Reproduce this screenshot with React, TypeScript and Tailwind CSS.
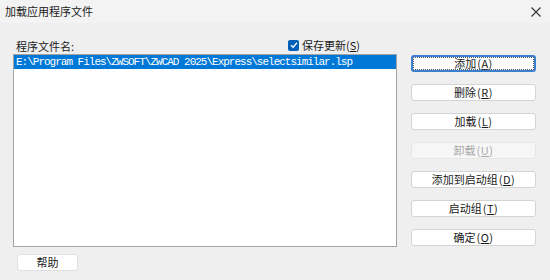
import React from "react";

const cjk = { fontFamily: '"Noto Sans CJK SC", "Noto Sans", sans-serif' };

function Btn({
  label,
  keyChar,
  focused,
  disabled,
}: {
  label: string;
  keyChar?: string;
  focused?: boolean;
  disabled?: boolean;
}) {
  let cls =
    "flex h-[17px] w-[125px] items-center justify-center rounded-[3px] text-[11px] leading-none ";
  if (focused) cls += "border-2 border-[#3b7fd0] bg-white text-[#1a1a1a] outline-1 outline-dotted outline-[#555] -outline-offset-[3px]";
  else if (disabled) cls += "border border-[#e6e6e6] bg-[#f6f6f6] text-[#a8a8a8]";
  else cls += "border border-[#d4d4d4] bg-white text-[#1a1a1a]";
  return (
    <div className={cls}>
      <span>{label}</span>
      {keyChar && (
        <span className="ml-[1px] tracking-[0.5px]">
          (<u className="underline-offset-[1px]">{keyChar}</u>)
        </span>
      )}
    </div>
  );
}

export default function App() {
  return (
    <div className="h-[280px] w-[550px] overflow-hidden bg-[#efefef] text-[#1a1a1a]" style={cjk}>
      {/* title bar */}
      <div className="flex h-[23px] items-center justify-between bg-[#f3f3f3] pl-[5px] pr-[8px]">
        <span className="text-[11px]">加载应用程序文件</span>
        <svg width="10" height="10" viewBox="0 0 10 10" className="mr-[1px]">
          <path d="M0.5 0.5 L9.5 9.5 M9.5 0.5 L0.5 9.5" stroke="#333" strokeWidth="1.1" />
        </svg>
      </div>

      <div className="flex pl-[13px]">
        {/* left side */}
        <div className="w-[384px] pt-[13px]">
          <div className="flex h-[18px] items-center">
            <span className="w-[275px] pl-[3px] pt-[3px] text-[11px]">程序文件名:</span>
            <span className="flex items-center gap-[3px] text-[11px]">
              <span className="flex h-[11px] w-[11px] items-center justify-center rounded-[2px] bg-[#005fb8]">
                <svg width="8" height="8" viewBox="0 0 8 8">
                  <path d="M1 4.2 L3.1 6.2 L7 1.8" fill="none" stroke="white" strokeWidth="1.3" />
                </svg>
              </span>
              <span>
                保存更新(<u className="underline-offset-[1px]">S</u>)
              </span>
            </span>
          </div>
          <div className="h-[193px] border border-[#a3a3a3] bg-white">
            <div
              className="flex h-[14px] items-center bg-[#0078d7] pl-[2px] text-[11px] leading-none tracking-[-1px] text-white"
              style={{ fontFamily: '"Liberation Mono", monospace' }}
            >
              E:\Program Files\ZWSOFT\ZWCAD 2025\Express\selectsimilar.lsp
            </div>
          </div>
          <div className="ml-[4px] mt-[7px] flex h-[17px] w-[61px] items-center justify-center rounded-[3px] border border-[#e0e0e0] bg-white text-[11px]">
            帮助
          </div>
        </div>

        {/* right side buttons */}
        <div className="ml-[14px] flex flex-col gap-[12px] pt-[32px]">
          <Btn label="添加" keyChar="A" focused />
          <Btn label="删除" keyChar="R" />
          <Btn label="加载" keyChar="L" />
          <Btn label="卸载" keyChar="U" disabled />
          <Btn label="添加到启动组" keyChar="D" />
          <Btn label="启动组" keyChar="T" />
          <Btn label="确定" keyChar="O" />
        </div>
      </div>
    </div>
  );
}
